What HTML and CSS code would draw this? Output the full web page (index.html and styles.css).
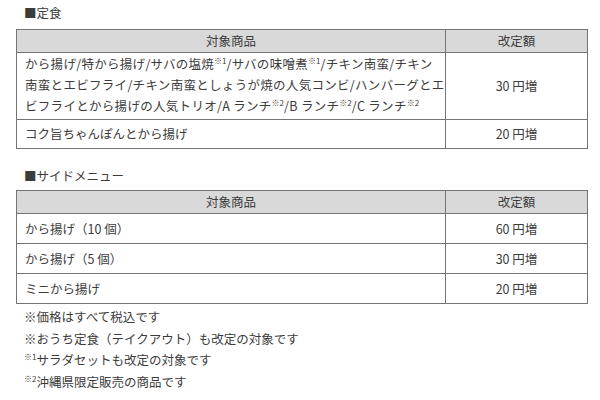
FILE: index.html
```html
<!DOCTYPE html>
<html lang="ja">
<head>
<meta charset="utf-8">
<title>改定額</title>
<link rel="stylesheet" href="styles.css">
</head>
<body>
<div class="page">
  <h2 class="section-title first">■定食</h2>
  <table class="price-table">
    <colgroup><col class="col-item"><col class="col-price"></colgroup>
    <thead>
      <tr><th>対象商品</th><th>改定額</th></tr>
    </thead>
    <tbody>
      <tr class="multi">
        <td class="item">から揚げ/特から揚げ/サバの塩焼<sup>※1</sup>/サバの味噌煮<sup>※1</sup>/チキン南蛮/チキン<br>南蛮とエビフライ/チキン南蛮としょうが焼の人気コンビ/ハンバーグとエ<br>ビフライとから揚げの人気トリオ/A ランチ<sup>※2</sup>/B ランチ<sup>※2</sup>/C ランチ<sup>※2</sup></td>
        <td class="price">30 円増</td>
      </tr>
      <tr>
        <td class="item">コク旨ちゃんぽんとから揚げ</td>
        <td class="price">20 円増</td>
      </tr>
    </tbody>
  </table>

  <h2 class="section-title second">■サイドメニュー</h2>
  <table class="price-table side">
    <colgroup><col class="col-item"><col class="col-price"></colgroup>
    <thead>
      <tr><th>対象商品</th><th>改定額</th></tr>
    </thead>
    <tbody>
      <tr><td class="item">から揚げ（10 個）</td><td class="price">60 円増</td></tr>
      <tr><td class="item">から揚げ（5 個）</td><td class="price">30 円増</td></tr>
      <tr><td class="item">ミニから揚げ</td><td class="price">20 円増</td></tr>
    </tbody>
  </table>

  <ul class="notes">
    <li>※価格はすべて税込です</li>
    <li>※おうち定食（テイクアウト）も改定の対象です</li>
    <li><sup>※1</sup>サラダセットも改定の対象です</li>
    <li><sup>※2</sup>沖縄県限定販売の商品です</li>
  </ul>
</div>
</body>
</html>
```

FILE: styles.css
```css
* { box-sizing: border-box; }

html, body {
  margin: 0;
  padding: 0;
  background: #ffffff;
}

body {
  font-family: "Noto Sans CJK JP", "Noto Sans", sans-serif;
  font-size: 12.5px;
  color: #3c3c3c;
}

.page {
  padding: 3px 0 0 16px;
  width: 600px;
}

.section-title {
  margin: 0;
  padding-left: 8px;
  font-size: 12.5px;
  font-weight: normal;
  line-height: 20px;
}

.section-title.first { margin-bottom: 6px; }
.section-title.second { margin-top: 17px; margin-bottom: 4px; }

.price-table {
  border-collapse: collapse;
  width: 571px;
  table-layout: fixed;
}

.col-item { width: 429px; }
.col-price { width: 142px; }

.price-table th,
.price-table td {
  border: 1px solid #747474;
}

.price-table th {
  background: #d9d9d9;
  font-weight: normal;
  text-align: center;
  line-height: 20px;
  padding: 1px 0;
}

.price-table td {
  line-height: 20px;
  padding: 4px 8px;
  vertical-align: middle;
}

.price-table td.price {
  text-align: center;
  padding-left: 0;
  padding-right: 0;
}

.price-table tr.multi td.item {
  line-height: 21px;
  padding: 0 0 3px 8px;
  letter-spacing: 0.3px;
  white-space: nowrap;
}

.price-table.side td {
  padding-top: 5px;
  padding-bottom: 4px;
}

sup {
  font-size: 8px;
  line-height: 0;
  vertical-align: 5px;
  letter-spacing: 0;
}

.notes {
  list-style: none;
  margin: 2px 0 0;
  padding: 0 0 0 8px;
}

.notes li {
  line-height: 21.7px;
}
```
